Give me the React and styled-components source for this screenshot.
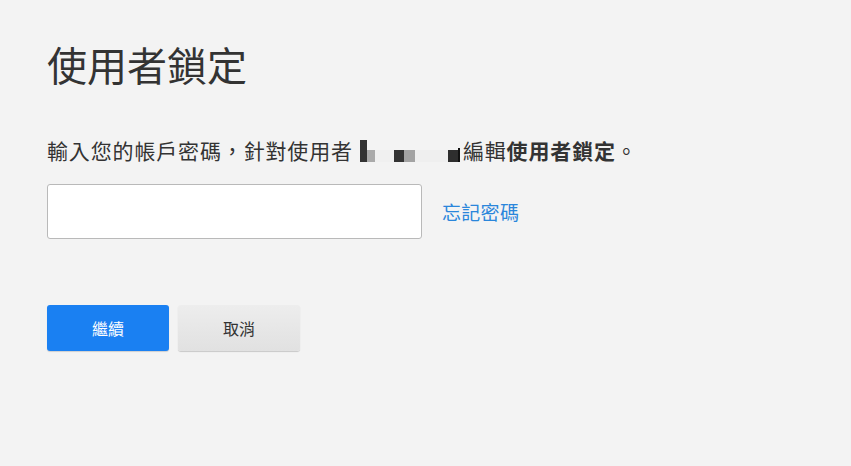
import React, { useState } from "react";
import styled, { createGlobalStyle } from "styled-components";

const GlobalStyle = createGlobalStyle`
  html, body {
    margin: 0;
    padding: 0;
    background: #f3f3f3;
  }
  body {
    font-family: "Noto Sans CJK TC", "Noto Sans", sans-serif;
    color: #333;
  }
`;

const Page = styled.div`
  min-height: 466px;
  padding: 36px 47px 0;
  box-sizing: border-box;
`;

const Title = styled.h1`
  margin: 0;
  font-size: 40px;
  font-weight: 400;
  line-height: 56px;
  color: #333;
`;

const Prompt = styled.p`
  margin: 43px 0 0;
  font-size: 21px;
  line-height: 30px;
  letter-spacing: 0.85px;
  display: flex;
  align-items: center;
  white-space: nowrap;

  b {
    font-weight: 700;
  }
`;

const Redacted = styled.span`
  display: inline-flex;
  align-items: flex-end;
  height: 22px;
  margin: 0 3px 0 7px;
  position: relative;
  top: 1px;
`;

const Pixel = styled.span`
  display: block;
  width: ${(p) => p.$w}px;
  height: ${(p) => p.$h}px;
  background: ${(p) => p.$c};
`;

const FieldRow = styled.div`
  display: flex;
  align-items: center;
  gap: 20px;
  margin-top: 19px;
`;

const PasswordInput = styled.input`
  width: 375px;
  height: 55px;
  box-sizing: border-box;
  border: 1px solid #b9b9b9;
  border-radius: 3px;
  background: #fff;
  padding: 0 12px;
  font-size: 18px;
  outline: none;
`;

const ForgotLink = styled.a`
  font-size: 19px;
  letter-spacing: 0.3px;
  color: #2a86db;
  text-decoration: none;
  cursor: pointer;
`;

const Actions = styled.div`
  display: flex;
  gap: 9px;
  margin-top: 66px;
`;

const Button = styled.button`
  width: 122px;
  height: 46px;
  border-radius: 3px;
  font-family: inherit;
  font-size: 16px;
  cursor: pointer;
  border: none;
  color: ${(p) => (p.$primary ? "#fff" : "#333")};
  background: ${(p) =>
    p.$primary ? "#1a80f2" : "linear-gradient(#ededed, #e1e1e1)"};
  box-shadow: ${(p) =>
    p.$primary ? "0 1px 1px rgba(0,0,0,0.15)" : "0 1px 1px rgba(0,0,0,0.18)"};
`;

const pixels = [
  { w: 7, h: 22, c: "#333" },
  { w: 8, h: 12, c: "#aaa" },
  { w: 19, h: 12, c: "#f0f0f0" },
  { w: 10, h: 12, c: "#333" },
  { w: 11, h: 12, c: "#a3a3a3" },
  { w: 33, h: 12, c: "#efefef" },
  { w: 10, h: 12, c: "#2e2e2e" },
  { w: 2, h: 14, c: "#111" },
];

const App = () => {
  const [password, setPassword] = useState("");

  return (
    <>
      <GlobalStyle />
      <Page>
        <Title>使用者鎖定</Title>
        <Prompt>
          輸入您的帳戶密碼，針對使用者
          <Redacted>
            {pixels.map((p, i) => (
              <Pixel key={i} $w={p.w} $h={p.h} $c={p.c} />
            ))}
          </Redacted>
          編輯<b>使用者鎖定</b>。
        </Prompt>
        <FieldRow>
          <PasswordInput
            type="password"
            value={password}
            onChange={(e) => setPassword(e.target.value)}
          />
          <ForgotLink>忘記密碼</ForgotLink>
        </FieldRow>
        <Actions>
          <Button $primary>繼續</Button>
          <Button>取消</Button>
        </Actions>
      </Page>
    </>
  );
};

export default App;
